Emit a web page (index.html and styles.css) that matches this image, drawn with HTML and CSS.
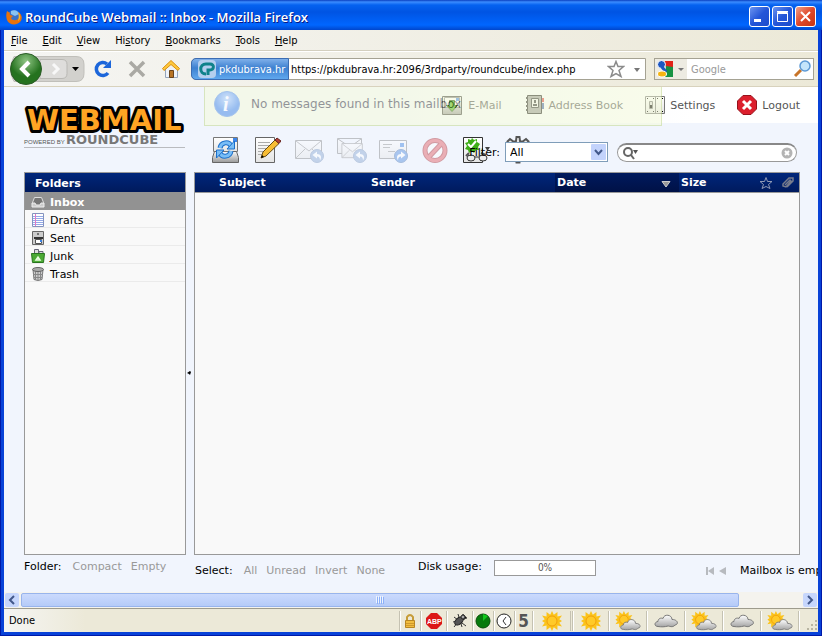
FILE: index.html
```
<!DOCTYPE html>
<html lang="en">
<head>
    <meta charset="UTF-8">
    <meta name="viewport" content="width=device-width, initial-scale=1.0">
    <title>RoundCube Webmail :: Inbox</title>
    <link rel="stylesheet" href="styles.css">
</head>
<body>
    <!-- Shared shapes -->
    <svg class="defs" width="0" height="0">
        <defs>
            <linearGradient id="paper" x2="0" y2="1"><stop offset="0" stop-color="#fff"/><stop offset="1" stop-color="#e4e4e4"/></linearGradient>
            <linearGradient id="metal" x2="0" y2="1"><stop offset="0" stop-color="#fafafa"/><stop offset="1" stop-color="#999"/></linearGradient>
            <linearGradient id="cloudFill" x2="0" y2="1"><stop offset="0" stop-color="#fff"/><stop offset="1" stop-color="#a5a5a5"/></linearGradient>
            <radialGradient id="greenBall" cy=".25"><stop offset="0" stop-color="#8fc583"/><stop offset="1" stop-color="#25721f"/></radialGradient>
            <radialGradient id="blueBall" cy=".3"><stop offset="0" stop-color="#b0d2f8"/><stop offset="1" stop-color="#3f85e4"/></radialGradient>
            <symbol id="sun" viewBox="0 0 22 22">
                <path fill="#fbc31b" d="M11 0l2 4 4-3v5l5-1-3 4 3 2-3 2 3 4-5-1v5l-4-3-2 4-2-4-4 3v-5l-5 1 3-4-3-2 3-2-3-4 5 1V1l4 3z"/>
                <circle cx="11" cy="11" r="5.500" fill="#ffca28" stroke="#f09a08"/>
            </symbol>
            <symbol id="cloud" viewBox="0 0 24 14">
                <path fill="url(#cloudFill)" stroke="#777" d="M4 12.500C0 12.500 0 8 4 7.500c0-3 3-4 5-3 1-5 9-4 9 1 6 0 7 5 3 5.500-2 3-6 1-7 1-3 1-7 1-10 .5z"/>
            </symbol>
            <symbol id="suncloud" viewBox="0 0 28 22">
                <use href="#sun" width="19" height="19"/>
                <use href="#cloud" x="5" y="8" width="23" height="14"/>
            </symbol>
            <symbol id="envelope" viewBox="0 0 28 28">
                <path fill="url(#paper)" stroke="#777" d="M.5 4.500h26v18H.5z"/>
                <path fill="none" stroke="#888" d="M1 5l13 10L26 5M1 22l9-9m16 9l-9-9"/>
            </symbol>
            <symbol id="replyball" viewBox="0 0 14 14">
                <circle cx="7" cy="7" r="6.500" fill="#7da0d0" stroke="#6c89b5"/>
                <path fill="#fff" d="M2.500 6L7 2.500V5c4 0 5 3 3 6.500C10 9 9 7.500 7 7.500v2z"/>
            </symbol>
        </defs>
    </svg>

    <!-- Title bar -->
    <div class="titlebar">
        <svg width="16" height="16" viewBox="0 0 16 16">
            <circle cx="8" cy="8" r="7" fill="#3a72c8"/>
            <path fill="#8ac4f2" d="M5 2c4-2 7 0 8 3l-4 2-4-2z"/>
            <path fill="#e8720c" d="M1 2l3 2c-1 2 1 2 3 3L5 9c1 3 6 3 8 0 1-2 0-5-1-6 4 2 5 7 2 10-4 4-11 3-13-2C0 8 0 5 1 2z"/>
            <path fill="#fbb829" d="M12 3c3 3 3 7 0 9 1-3 1-6 0-9z"/>
        </svg>
        <span class="window-title">RoundCube Webmail :: Inbox - Mozilla Firefox</span>
        <button class="win-btn" aria-label="Minimize"><svg width="19" height="19"><path fill="#fff" d="M4 12h7v3H4z"/></svg></button>
        <button class="win-btn" aria-label="Maximize"><svg width="19" height="19"><path fill="none" stroke="#fff" d="M4.500 5.500h10v9h-10zM4 4.500h11M4 6.500h11"/></svg></button>
        <button class="win-btn close" aria-label="Close"><svg width="19" height="19"><path stroke="#fff" stroke-width="2" d="M5 5l9 9m0-9l-9 9"/></svg></button>
    </div>

    <nav class="menubar">
        <a href="#"><u>F</u>ile</a>
        <a href="#"><u>E</u>dit</a>
        <a href="#"><u>V</u>iew</a>
        <a href="#">Hi<u>s</u>tory</a>
        <a href="#"><u>B</u>ookmarks</a>
        <a href="#"><u>T</u>ools</a>
        <a href="#"><u>H</u>elp</a>
    </nav>

    <!-- Navigation toolbar -->
    <div class="navbar">
        <button class="history-btns" aria-label="Back and forward">
            <svg width="80" height="34" viewBox="0 0 80 34">
                <path fill="#d2d1cd" stroke="#c0bfba" d="M8 4.500h62q8 0 8 8v9q0 8-8 8H8q-7-12 0-25z"/>
                <path fill="#dedddb" stroke="#b9b8b4" d="M34 7.500h22q5 0 5 5v9q0 5-5 5H34z"/>
                <path fill="none" stroke="#f8f8f8" stroke-width="3" d="M47 12l5 5-5 5"/>
                <circle cx="20" cy="17" r="15.500" fill="url(#greenBall)" stroke="#2b5c27"/>
                <path fill="none" stroke="#fff" stroke-width="4" d="M23 10l-7 7 7 7"/>
                <path d="M66 15h7l-3.500 4z"/>
            </svg>
        </button>
        <button aria-label="Reload"><svg width="20" height="20"><path fill="none" stroke="#1c66da" stroke-width="3.500" d="M15 14a6.500 6.500 0 1 1-1-9"/><path fill="#1c66da" d="M18 1v8h-8z"/></svg></button>
        <button aria-label="Stop"><svg width="20" height="20"><path stroke="#aaa9a4" stroke-width="3.500" d="M3 3l14 14m0-14L3 17"/></svg></button>
        <button aria-label="Home">
            <svg width="20" height="20">
                <path fill="#eef3fa" stroke="#95a5bb" d="M4.500 9v9.500h12V9"/>
                <path fill="#ffc93c" stroke="#d98f12" d="M10 1.500l8.500 8-1.500 2-7-6-7 6-1.500-2z"/>
                <path fill="#b87424" stroke="#68431b" d="M8.500 11.500h4v7h-4z"/>
            </svg>
        </button>
        <div class="urlbar">
            <button class="identity">
                <svg width="18" height="18">
                    <rect width="18" height="18" rx="4" fill="#b5cfee"/>
                    <path fill="none" stroke="#10828a" stroke-width="3" d="M8 14C1 14 1 4 8 4h4c5 0 4 6 0 6h-2v5"/>
                </svg>
                pkdubrava.hr
            </button>
            <input type="text" aria-label="Address" value="https://pkdubrava.hr:2096/3rdparty/roundcube/index.php">
            <svg width="18" height="18"><path fill="#fff" stroke="#8b8b8b" stroke-width="1.500" d="M9 1.500l2 5h5.500l-4.500 4 2 6-5-3-5 3 2-6-4.500-4H7z"/></svg>
            <svg width="20" height="18"><path fill="#777" d="M9 8h6l-3 4z"/></svg>
        </div>
        <div class="searchbar">
            <button class="engine" aria-label="Search engine">
                <svg width="32" height="20">
                    <path fill="#e22318" d="M9 2h9v7l-9-2z"/><path fill="#179344" d="M11 7l7 1v10h-8z"/>
                    <circle cx="6.500" cy="5.500" r="4" fill="#1d57c2" stroke="#fff"/><path stroke="#1d57c2" stroke-width="3" d="M7 8l4 5"/><ellipse cx="7" cy="15" rx="4.500" ry="3" fill="#f7b512" stroke="#fff"/>
                    <path fill="#777" d="M23 9h6l-3 3z"/>
                </svg>
            </button>
            <input type="text" aria-label="Web search" placeholder="Google">
            <svg width="20" height="20"><path stroke="#c87428" stroke-width="3" d="M2 17l6-6"/><circle cx="12" cy="7" r="5" fill="#c4e5fb" stroke="#5c99d5" stroke-width="1.500"/></svg>
        </div>
    </div>

    <!-- RoundCube page -->
    <main class="page">
        <div class="message">
            <svg width="28" height="28">
                <circle cx="14" cy="14" r="12.500" fill="url(#blueBall)" stroke="#5a93dc"/>
                <text x="10" y="21" class="info-i">i</text>
            </svg>
            No messages found in this mailbox
        </div>

        <header class="header">
            <svg class="logo" width="162" height="44">
                <text x="3" y="25" class="logo-big">WEBMAIL</text>
                <text x="0" y="39" class="logo-powered">POWERED BY</text>
                <text x="42" y="39" class="logo-name">ROUNDCUBE</text>
                <path stroke="#b9bbbf" d="M0 42.500h161"/>
            </svg>
            <div class="header-right">
                <nav class="taskbar">
                    <a href="#">
                        <svg width="22" height="22"><path fill="url(#metal)" stroke="#444" d="M1.500 2.500h19v18h-19z"/><path fill="#fff" stroke="#888" d="M3.500 3.500h15v10h-15z"/><path fill="#4787e8" d="M15 4h3v3h-3z"/><path fill="#4fb613" stroke="#1d5c07" d="M8.500 6.500h5v5h3l-5.500 6-5.500-6h3z"/></svg>
                        E-Mail
                    </a>
                    <a href="#">
                        <svg width="20" height="22"><path fill="#999" stroke="#222" d="M3.500 1.500h14v18h-14z"/><path fill="#eee" stroke="#333" d="M7.500 4.500h7v9h-7z"/><path fill="#333" d="M9 10h4v2H9zm1-4h2v3h-2z"/><path stroke="#333" stroke-width="2" stroke-dasharray="2" d="M3 3v16"/><path fill="#d44" d="M18 4h2v4h-2z"/><path fill="#46a" d="M18 9h2v6h-2z"/></svg>
                        Address Book
                    </a>
                    <a href="#">
                        <svg width="20" height="22"><path fill="url(#paper)" stroke="#777" d="M.5 2.500h19v17H.5zM10.500 2v18"/><path fill="#ddd" stroke="#777" d="M4.500 7.500h3v7h-3z"/><path d="M5 11h2v3H5zM2 4h1v1H2zm6 0h1v1H8zM2 17h1v1H2zm6 0h1v1H8zm4-13h1v1h-1zm5 0h1v1h-1zm-5 13h1v1h-1zm5 0h1v1h-1z"/></svg>
                        Settings
                    </a>
                    <a href="#">
                        <svg width="20" height="22"><path fill="#dc1f2d" stroke="#96121b" d="M6 1.500h8l5.500 5.500v8L14 20.500H6L.5 15V7z"/><path stroke="#fff" stroke-width="3" d="M6 7l8 8m0-8l-8 8"/></svg>
                        Logout
                    </a>
                </nav>
                <div class="toolbar">
                    <button aria-label="Check for new messages">
                        <svg width="28" height="28"><path fill="url(#paper)" stroke="#777" d="M2.500 1.500h24v14h-24z"/><path fill="#3f86ea" d="M22 2h4v4h-4z"/><path fill="url(#metal)" stroke="#666" d="M3.500 15.500h4l3 5h8l3-5h4l2 6v5h-26v-5z"/><path fill="none" stroke="#1c70cb" stroke-width="5" d="M9 12c1-6 9-7 11-2M20 15c-1 6-9 7-11 2"/><path fill="none" stroke="#79bdf6" stroke-width="3" d="M9 12c1-6 9-7 11-2M20 15c-1 6-9 7-11 2"/><path fill="#79bdf6" stroke="#1c70cb" d="M23.500 5v8H16zM5.500 22v-8H13z"/></svg>
                    </button>
                    <button aria-label="Compose">
                        <svg width="28" height="28"><path fill="url(#paper)" stroke="#666" d="M2.500 1.500h19v25h-19z"/><path stroke="#aaa" d="M5 6.500h12M5 9.500h11M5 12.500h8M5 15.500h7M5 18.500h4"/><path fill="#f8bd34" stroke="#684c14" d="M8 22l2-6L22 4l4 3.500L13 20z"/><path fill="#b64135" stroke="#68251f" d="M22 4l2-2 4 3-2 2.500z"/><path d="M8 22l1-3 2 2z"/></svg>
                    </button>
                    <button disabled aria-label="Reply">
                        <svg width="30" height="28"><use href="#envelope" width="28" height="28"/><use href="#replyball" x="15" y="13" width="14" height="14"/></svg>
                    </button>
                    <button disabled aria-label="Reply to all">
                        <svg width="30" height="28"><path fill="url(#paper)" stroke="#777" d="M.5 2.500h24v15H.5zM1 3l12 8 11-8"/><use href="#envelope" x="3" y="4" width="25" height="22"/><use href="#replyball" x="16" y="13" width="14" height="14"/></svg>
                    </button>
                    <button disabled aria-label="Forward">
                        <svg width="30" height="28"><path fill="url(#paper)" stroke="#777" d="M.5 4.500h27v18H.5z"/><path fill="#2877e0" d="M21 7h4v4h-4z"/><path stroke="#888" d="M4 8.500h9M4 11.500h7M9 15.500h7"/><circle cx="22" cy="20" r="6.500" fill="#3d80dc" stroke="#3667ac"/><path fill="#fff" d="M26.500 19L22 15.500V18c-4 0-5 3-3 6.500 0-2.500 1-4 3-4v2z"/></svg>
                    </button>
                    <button disabled aria-label="Delete">
                        <svg width="28" height="28"><circle cx="14" cy="14.500" r="10" fill="#fff" stroke="#a2141b" stroke-width="5"/><path stroke="#a2141b" stroke-width="5" d="M7 22L21 7"/><circle cx="14" cy="14.500" r="10" fill="none" stroke="#e2474c" stroke-width="3"/><path stroke="#e2474c" stroke-width="3" d="M7 22L21 7"/></svg>
                    </button>
                    <button aria-label="Mark messages">
                        <svg width="30" height="28"><path fill="url(#paper)" stroke="#333" d="M.5 1.500h19v25H.5z"/><path fill="#3fae19" d="M9 2l2 2 3-1 0 3 3 2-2 3 1 3-3 0-2 3-2-2-3 2-1-3-3-1 2-3-2-3 3-1 0-3 3 1z"/><path fill="none" stroke="#fff" stroke-width="2" d="M5 8l3 3 5-6"/><path fill="none" stroke="#555" stroke-width="2" d="M3 20l3-3m12 0l5 2"/><ellipse cx="8" cy="22" rx="4" ry="3" fill="#eee" stroke="#333"/><ellipse cx="20" cy="22" rx="4" ry="3" fill="#eee" stroke="#333"/><path stroke="#333" d="M12 21h4"/><path fill="#444" d="M22 11h5l-2.500 4z"/></svg>
                    </button>
                    <button aria-label="More actions">
                        <svg width="28" height="28"><path fill="url(#metal)" stroke="#555" stroke-width="2" d="M11 5l.5-4h3l.5 4 2 1 4-3 2.500 2.500-2.500 4 1 2 4 .5v3l-4 .5-1 3 2.500 3-2.500 3-4-3-2 1-.5 4h-3l-.5-4-2-1-4 3-2.500-3 2.500-3-1-3-4-.5v-3l4-.5 1-2-2.500-4L5 3l4 3z"/></svg>
                    </button>
                </div>
            </div>
        </header>

        <div class="filters">
            <label for="filter">Filter:</label>
            <div class="select-wrap">
                <select id="filter">
                    <option>All</option>
                    <option>Unread</option>
                </select>
                <svg width="15" height="16"><rect width="15" height="16" rx="1" fill="#c3d3fc"/><path fill="none" stroke="#42588a" stroke-width="2" d="M4 6l3.500 4L11 6"/></svg>
            </div>
            <div class="quicksearch">
                <svg width="18" height="14"><circle cx="6" cy="6" r="4" fill="none" stroke="#666" stroke-width="2"/><path stroke="#666" stroke-width="2" d="M9 9l3 4"/><path fill="#555" d="M11 4h5l-2.500 4z"/></svg>
                <input type="text" aria-label="Search messages">
                <button aria-label="Reset search"><svg width="12" height="12"><circle cx="6" cy="6" r="5.500" fill="#b4b4b4"/><path stroke="#fff" stroke-width="2" d="M4 4l4 4m0-4L4 8"/></svg></button>
            </div>
        </div>

        <div class="main">
            <section class="folders">
                <h2>Folders</h2>
                <ul>
                    <li class="selected"><a href="#"><svg width="14" height="16"><path fill="#777" stroke="#ddd" d="M3.500 3.500h7l2 5v4H1.500v-4z"/><path fill="#ccc" stroke="#eee" d="M1 9h3l1 2h4l1-2h3v4H1z"/></svg>Inbox</a></li>
                    <li><a href="#"><svg width="14" height="16"><path fill="#fff" stroke="#8493be" d="M1.500 1.500h11v13h-11z"/><path stroke="#94a9e8" d="M2 4.500h10M2 6.500h10M2 8.500h10M2 10.500h10M2 12.500h10"/><path stroke="#e47ac5" d="M4.500 2v12"/></svg>Drafts</a></li>
                    <li><a href="#"><svg width="14" height="16"><path fill="#ccc" stroke="#666" d="M1.500 1.500h11v13h-11z"/><path fill="#fff" stroke="#555" d="M4.500 9.500h6v4h-6z"/><path fill="#333" d="M3 7h9v2H3z"/><circle cx="7" cy="4" r="1" fill="#555"/><path fill="#3a80e0" d="M9 10h2v2H9z"/></svg>Sent</a></li>
                    <li><a href="#"><svg width="14" height="16"><path fill="#ddd" stroke="#667" d="M3.500 6V1.500h4V6M8 6V3.500h4V6"/><path fill="#4caa35" stroke="#28751e" d="M.5 5.500h13l-1 9h-11z"/><path fill="none" stroke="#e9ffe0" stroke-width="1.500" d="M5 12l2-3 2 3z"/></svg>Junk</a></li>
                    <li><a href="#"><svg width="14" height="16"><path fill="#ccc" stroke="#777" d="M2 3.500l1 10q4 2 8 0l1-10z"/><path stroke="#888" d="M4.500 5v9M7 5v10M9.500 5v9M2 8.500h10M3 11.500h8"/><ellipse cx="7" cy="3.500" rx="5.500" ry="2" fill="#aaa" stroke="#666"/></svg>Trash</a></li>
                </ul>
            </section>
            <div class="splitter"><svg width="5" height="6"><path d="M0 3l3-2 1 1-1 3-1-1z"/></svg></div>
            <section class="messages">
                <table>
                    <thead>
                        <tr>
                            <th class="flag"></th>
                            <th class="subject"><a href="#">Subject</a></th>
                            <th><a href="#">Sender</a></th>
                            <th class="date sorted"><a href="#">Date</a><svg width="10" height="8"><path fill="#999" stroke="#ccc" d="M1 1.500h8L5 7z"/></svg></th>
                            <th class="size"><a href="#">Size</a></th>
                            <th class="flag"><svg width="14" height="14"><path fill="none" stroke="#9099b5" d="M7 1.500l1.500 4h4.500l-3.500 3 1.500 4-4-2-4 2 1.500-4-3.500-3h4.500z"/></svg></th>
                            <th class="flag"><svg width="14" height="14"><path fill="none" stroke="#777c8c" stroke-width="1.500" d="M4 9l5-5 1 1-5 6-3-1 0-2 6-6 4 0 0 3-6 6"/></svg></th>
                        </tr>
                    </thead>
                </table>
            </section>
        </div>

        <footer class="controls">
            <div class="folder-controls">
                <span>Folder:</span>
                <a href="#">Compact</a>
                <a href="#">Empty</a>
            </div>
            <div class="select-controls">
                <span>Select:</span>
                <a href="#">All</a>
                <a href="#">Unread</a>
                <a href="#">Invert</a>
                <a href="#">None</a>
            </div>
            <div class="quota">
                <span>Disk usage:</span>
                <span class="quota-bar">0%</span>
            </div>
            <div class="pager">
                <svg width="22" height="10"><path fill="#b7babf" d="M1 1h2v8H1zM9 1v8L3 5zM21 1v8l-7-4z"/></svg>
                <span>Mailbox is empty</span>
            </div>
        </footer>
    </main>

    <div class="scrollbar">
        <button aria-label="Scroll left"><svg width="14" height="14"><path fill="none" stroke="#42588a" stroke-width="2" d="M9 3L5 7l4 4"/></svg></button>
        <div class="track"><div class="thumb"><svg width="8" height="8"><path stroke="#eef4fe" d="M.5 0v7M2.500 0v7M4.500 0v7M6.500 0v7"/><path stroke="#8cb0f8" d="M1.500 1v7M3.500 1v7M5.500 1v7M7.500 1v7"/></svg></div></div>
        <button aria-label="Scroll right"><svg width="14" height="14"><path fill="none" stroke="#42588a" stroke-width="2" d="M5 3l4 4-4 4"/></svg></button>
    </div>

    <!-- Status bar with add-on icons -->
    <div class="statusbar">
        <span class="status-text">Done</span>
        <span class="panel small"><svg width="12" height="16"><path fill="none" stroke="#c69c38" stroke-width="2" d="M3 8V4q3-4 6 0v4"/><path fill="#f1bd3d" stroke="#b88621" d="M1.500 7.500h9v7h-9z"/><path stroke="#cf982b" d="M2 10.500h8M2 12.500h8"/></svg></span>
        <span class="panel"><svg width="16" height="16"><path fill="#dc1717" d="M5 0h6l5 5v6l-5 5H5l-5-5V5z"/><text x="1" y="11" class="abp">ABP</text></svg></span>
        <span class="panel"><svg width="16" height="16"><path stroke="#333" d="M2 4l12 9M1 9l12-3M6 1l4 13M11 1l-1 5 5-1M2 14l4-5"/><ellipse cx="7" cy="8" rx="5" ry="3" fill="#555" stroke="#222" transform="rotate(-40 7 8)"/><circle cx="11" cy="4" r="2" fill="#aaa" stroke="#222"/></svg></span>
        <span class="panel small"><svg width="16" height="16"><circle cx="8" cy="8" r="7" fill="#087b0d" stroke="#064f09"/><path fill="#11c91b" d="M8 8V1l5 2z"/></svg></span>
        <span class="panel small"><svg width="16" height="16"><circle cx="8" cy="8" r="7" fill="#fff" stroke="#222"/><path fill="none" stroke="#333" d="M10 4L7 8l3 4"/></svg></span>
        <span class="panel tiny">5</span>
        <span class="panel wide"><svg width="20" height="20"><use href="#sun"/></svg></span>
        <span class="panel wide double"><svg width="20" height="20"><use href="#sun"/></svg></span>
        <span class="panel wide"><svg width="28" height="20"><use href="#suncloud"/></svg></span>
        <span class="panel wide"><svg width="24" height="14"><use href="#cloud"/></svg></span>
        <span class="panel wide"><svg width="28" height="20"><use href="#suncloud"/></svg></span>
        <span class="panel wide"><svg width="24" height="14"><use href="#cloud"/></svg></span>
        <span class="panel wide"><svg width="28" height="20"><use href="#suncloud"/></svg></span>
        <span class="panel grip"><svg width="12" height="12"><path fill="#b8b5a2" d="M9 1h2v2H9zM5 5h2v2H5zm4 0h2v2H9zM1 9h2v2H1zm4 0h2v2H5zm4 0h2v2H9z"/></svg></span>
    </div>
</body>
</html>
```

FILE: styles.css
```
* {
    margin: 0;
    padding: 0;
    box-sizing: border-box;
}

body {
    display: flex;
    flex-direction: column;
    height: 100vh;
    padding: 0 4px 4px;
    overflow: hidden;
    background: #0842d8;
    box-shadow: inset 1px -1px 0 #0019a8, inset -1px 0 0 #0019a8;
    font-family: "DejaVu Sans Condensed", "DejaVu Sans", sans-serif;
    font-stretch: condensed;
    font-size: 11px;
    color: #000;
}

.defs {
    position: absolute;
}

svg {
    flex: none;
    display: block;
}

a {
    color: inherit;
    text-decoration: none;
}

button {
    background: none;
    border: none;
    font: inherit;
}

input, select {
    font: inherit;
    color: #000;
    border: none;
    outline: none;
    min-width: 0;
}

/* Browser window */
.titlebar {
    display: flex;
    align-items: center;
    gap: 2px;
    height: 30px;
    flex: none;
    margin: 0 -4px;
    padding: 3px 6px 0;
    background: linear-gradient(#0a3fc0 0, #3b8cff 2px, #0562f0 5px, #0054e3 12px, #0066ff 25px, #0046cc 30px);
}

.window-title {
    flex: 1;
    padding-left: 1px;
    font-family: "Open Sans", sans-serif;
    font-stretch: normal;
    font-size: 13px;
    font-weight: 600;
    color: #fff;
    text-shadow: 1px 1px 0 #0a1883;
    white-space: nowrap;
}

.win-btn {
    width: 21px;
    height: 21px;
    border: 1px solid #fff;
    border-radius: 3px;
    background: linear-gradient(135deg, #6c94f0, #2456d8 50%, #1c4ccc);
}

.win-btn.close {
    background: linear-gradient(135deg, #f0a088, #e0482a 50%, #c83410);
}

.menubar {
    display: flex;
    align-items: center;
    gap: 15px;
    height: 21px;
    flex: none;
    padding: 0 7px;
    background: linear-gradient(90deg, #f5f5f3, #ece9d8);
    border-bottom: 1px solid #d3cfbf;
}

.navbar {
    display: flex;
    align-items: center;
    gap: 14px;
    height: 36px;
    flex: none;
    padding: 0 4px 0 2px;
    background: linear-gradient(90deg, #f5f5f3, #ece9d8);
    border-top: 1px solid #fff;
    border-bottom: 1px solid #d8d2bd;
}

.history-btns {
    margin-right: -7px;
}

.urlbar, .searchbar {
    display: flex;
    align-items: center;
    height: 22px;
    background: #fff;
    border: 1px solid #a5a293;
}

.urlbar {
    flex: 1;
    border-radius: 5px 0 0 5px;
    margin-left: -4px;
    margin-right: -6px;
}

.urlbar input {
    flex: 1;
    padding-left: 2px;
}

.identity {
    display: flex;
    align-items: center;
    gap: 3px;
    width: 98px;
    height: 22px;
    flex: none;
    margin-left: -1px;
    padding-left: 6px;
    color: #fff;
    background: linear-gradient(#7fb0ea, #3d80d0 45%, #60a8ee);
    border: 1px solid #3c6db3;
    border-radius: 5px 0 0 5px;
}

.searchbar {
    width: 160px;
}

.searchbar input {
    flex: 1;
    padding-left: 4px;
}

.searchbar input::placeholder {
    color: #999;
}

.engine {
    height: 20px;
    background: #edebe2;
}

/* Mail page */
.page {
    position: relative;
    flex: 1;
    display: flex;
    flex-direction: column;
    min-height: 0;
    overflow: hidden;
    padding: 0 18px 0 20px;
    background: #f1f5fd;
    font-family: "DejaVu Sans", sans-serif;
    font-stretch: normal;
}

.message {
    position: absolute;
    z-index: 2;
    top: 0;
    left: 200px;
    display: flex;
    align-items: center;
    gap: 10px;
    width: 458px;
    height: 39px;
    padding: 0 0 4px 8px;
    font-size: 12px;
    color: #333;
    background: #f5fbd8;
    border: 1px solid #bed683;
    border-top: none;
    opacity: .5;
}

.info-i {
    font: italic bold 20px "Liberation Serif", serif;
    fill: #fff;
}

.header {
    display: flex;
    gap: 8px;
    height: 85px;
    flex: none;
}

.logo {
    margin-top: 18px;
    overflow: visible;
}

.logo-big {
    font: bold 29px "DejaVu Sans", sans-serif;
    fill: #ffa423;
    stroke: #000;
    stroke-width: 6px;
    stroke-linejoin: round;
    paint-order: stroke;
}

.logo-powered {
    font: 6px "Liberation Sans", sans-serif;
    fill: #555;
}

.logo-name {
    font: bold 13px "DejaVu Sans", sans-serif;
    fill: #777;
}

.header-right {
    flex: 1;
}

.taskbar {
    display: flex;
    justify-content: flex-end;
    gap: 22px;
    height: 36px;
    margin-right: -18px;
    padding-right: 18px;
    color: #555;
    background: linear-gradient(90deg, #f1f5fd 30%, #fff 80%);
}

.taskbar a {
    display: flex;
    align-items: center;
    gap: 5px;
}

.toolbar {
    display: flex;
    gap: 14px;
    padding: 13px 0 0 17px;
}

.toolbar button {
    width: 28px;
}

.toolbar button:disabled {
    opacity: .4;
}

.filters {
    position: absolute;
    top: 55px;
    right: 21px;
    z-index: 1;
    display: flex;
    align-items: center;
}

.select-wrap {
    position: relative;
    width: 103px;
    margin: 0 9px 0 5px;
}

.select-wrap select {
    appearance: none;
    width: 100%;
    height: 20px;
    padding-left: 4px;
    background: #fff;
    border: 1px solid #7f9db9;
}

.select-wrap svg {
    position: absolute;
    top: 2px;
    right: 2px;
    pointer-events: none;
}

.quicksearch {
    display: flex;
    align-items: center;
    width: 180px;
    height: 19px;
    padding: 0 3px 0 4px;
    background: #fff;
    border: 1px solid #999;
    border-top: 2px solid #888;
    border-radius: 10px;
}

.quicksearch input {
    flex: 1;
    background: none;
}

.main {
    flex: 1;
    display: flex;
    min-height: 0;
}

.folders, .messages {
    background: #f9f9f9;
    border: 1px solid #999;
}

.folders {
    width: 162px;
}

.folders h2, .messages thead {
    color: #fff;
    background: linear-gradient(#00267b, #001a5c);
}

.folders h2 {
    height: 19px;
    padding-left: 10px;
    font-size: 11px;
    line-height: 21px;
}

.folders ul {
    list-style: none;
}

.folders li {
    height: 18px;
    border-bottom: 1px solid #ebebeb;
}

.folders li a {
    display: flex;
    align-items: center;
    gap: 5px;
    height: 19px;
    padding: 1px 0 0 6px;
}

.folders li.selected {
    color: #fff;
    font-weight: bold;
    background: #929292;
    border-color: #929292;
}

.splitter {
    display: flex;
    align-items: center;
    width: 8px;
    padding: 18px 0 0 1px;
}

.messages {
    flex: 1;
}

.messages table {
    width: 100%;
    table-layout: fixed;
    border-collapse: collapse;
}

.messages th {
    height: 19px;
    padding: 1px 2px 0;
    text-align: left;
    line-height: 18px;
    border-bottom: 1px solid #999;
}

.messages .flag {
    width: 22px;
    padding: 0 4px;
}

.messages .subject {
    width: 152px;
}

.messages .date {
    width: 124px;
}

.messages .date svg {
    float: right;
    margin: 6px 6px 0 0;
}

.messages .size {
    width: 76px;
}

.messages .sorted {
    background: linear-gradient(#001a5e, #001146);
}

.controls {
    display: flex;
    align-items: flex-start;
    height: 37px;
    flex: none;
    white-space: nowrap;
}

.controls a {
    color: #999;
}

.folder-controls, .select-controls {
    display: flex;
    gap: 9px;
}

.folder-controls span, .select-controls span {
    margin-right: 2px;
}

.folder-controls {
    width: 171px;
    padding-top: 5px;
}

.select-controls {
    width: 223px;
    padding-top: 9px;
}

.quota {
    display: flex;
    gap: 12px;
    padding-top: 5px;
}

.quota-bar {
    width: 102px;
    height: 16px;
    font-family: "DejaVu Sans Condensed", "DejaVu Sans", sans-serif;
    font-stretch: condensed;
    font-size: 10px;
    line-height: 14px;
    text-align: center;
    color: #555;
    background: #fff;
    border: 1px solid #999;
}

/* the pager runs past the right edge and is cut by the page */
.pager {
    display: flex;
    align-items: center;
    gap: 13px;
    flex: 0 0 95px;
    min-width: 0;
    margin-left: auto;
    padding-top: 9px;
}

.scrollbar {
    display: flex;
    height: 16px;
    flex: none;
    padding: 1px;
    background: #f4f3ee;
}

.scrollbar button {
    width: 14px;
    height: 14px;
    background: #c6d6fc;
    border-radius: 2px;
}

.track {
    flex: 1;
    padding: 0 2px;
}

.thumb {
    display: flex;
    align-items: center;
    justify-content: center;
    width: 92%;
    height: 14px;
    background: linear-gradient(#cbdafd, #b5cbf8);
    border: 1px solid #98b4ec;
    border-radius: 2px;
}

.statusbar {
    display: flex;
    align-items: center;
    height: 24px;
    flex: none;
    background: linear-gradient(90deg, #f5f5f3, #ece9d8 10%);
    border-top: 1px solid #9d9b8d;
}

.status-text {
    flex: 1;
    padding-left: 5px;
}

.panel {
    display: flex;
    align-items: center;
    justify-content: center;
    width: 26px;
    height: 20px;
    border-left: 1px solid #c5c2b2;
    box-shadow: inset 1px 0 0 #fff;
}

.panel.small {
    width: 21px;
}

.panel.tiny {
    width: 18px;
    font-size: 17px;
    font-weight: bold;
    color: #555;
}

.panel.wide {
    width: 38px;
}

.panel.double {
    border-left: 3px double #c5c2b2;
}

.panel.grip {
    width: 20px;
    align-items: flex-end;
    justify-content: flex-end;
}

.abp {
    font: bold 7px "Liberation Sans", sans-serif;
    fill: #fff;
}
```
